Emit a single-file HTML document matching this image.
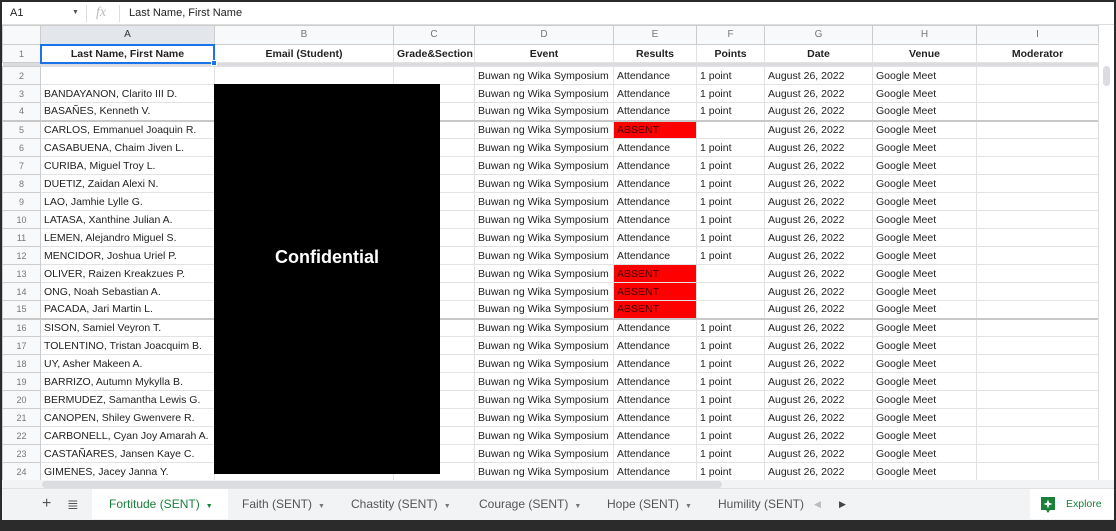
<!DOCTYPE html>
<html><head><meta charset="utf-8"><style>
*{box-sizing:border-box;margin:0;padding:0}
body{width:1116px;height:531px;background:#2b2b2b;position:relative;overflow:hidden;font-family:"Liberation Sans",Arial,sans-serif;font-size:10.5px;color:#222}
#app{position:absolute;left:2px;top:2px;width:1112px;height:518px;background:#fff;overflow:hidden}
#fb{position:absolute;left:0;top:0;width:1112px;height:23px;border-bottom:1px solid #ddd;background:#fff;font-size:11px}
#fb .nm{position:absolute;left:8px;top:5px}
#fb .dd{position:absolute;left:70px;top:7px;font-size:7px;color:#555}
#fb .sep{position:absolute;top:3px;width:1px;height:17px;background:#ddd}
#fb .fx{position:absolute;left:94px;top:3px;font-family:"Liberation Serif",serif;font-style:italic;color:#bbb;font-size:14px}
#fb .val{position:absolute;left:127px;top:5px}
table{position:absolute;left:0;top:23px;border-collapse:collapse;table-layout:fixed;width:1096px}
td{border:1px solid #e2e2e2;height:18px;padding:0 3px;white-space:nowrap;overflow:hidden;line-height:16px}
tr.hd td{background:#f8f9fa;color:#777;text-align:center;font-size:10px;height:19px;border-color:#ccc}
tr.hd td.selc{background:#e3e6ea;color:#333}
td.rn{background:#f8f9fa;color:#777;text-align:center;font-size:9px;padding:0;border-color:#ccc}
tr.r1 td{font-weight:bold;text-align:center}
tr.r1 td.rn{font-weight:normal}
tr.gap td{height:4px;padding:0;background:#dadce0;border:none}
td.ab{background:#ff0000;color:#3a0000}
tr.tk td{border-bottom:2px solid #c8c8c8}
#sel{position:absolute;left:38px;top:42px;width:175px;height:20px;border:2px solid #1a73e8}
#selh{position:absolute;left:209px;top:58px;width:6px;height:6px;background:#1a73e8;border:1px solid #fff}
#blk{position:absolute;left:212px;top:82px;width:226px;height:390px;background:#000;color:#fff;font-weight:bold;font-size:18px;text-align:center;line-height:346px;font-family:"Liberation Sans",sans-serif}
#vs{position:absolute;left:1096px;top:40px;width:16px;height:438px;background:#fff;border-left:1px solid #ddd}
#vs .th{position:absolute;left:4px;top:24px;width:7px;height:20px;background:#dadce0;border-radius:4px}
#hs{position:absolute;left:0;top:478px;width:1112px;height:9px;background:#f1f3f4}
#hs .th{position:absolute;left:40px;top:1px;width:680px;height:7px;background:#dadce0;border-radius:4px}
#tabs{position:absolute;left:0;top:486px;width:1112px;height:32px;background:#f1f3f4;border-top:1px solid #e0e0e0}
.tab{position:absolute;top:0;height:30px;line-height:30px;color:#555;font-size:12px}
.tab .c{font-size:7px;color:#777;margin-left:6px}
.act{background:#fff;color:#188038}
.act .c{color:#188038}
#ex{position:absolute;left:1028px;top:0;width:84px;height:30px;background:#fff}
</style></head><body><div id="app">
<div id="fb"><span class="nm">A1</span><span class="dd">▼</span><span class="sep" style="left:84px"></span><span class="fx">fx</span><span class="sep" style="left:117px"></span><span class="val">Last Name, First Name</span></div>
<table>
<colgroup><col style="width:38px"><col style="width:174px"><col style="width:179px"><col style="width:81px"><col style="width:139px"><col style="width:83px"><col style="width:68px"><col style="width:108px"><col style="width:104px"><col style="width:122px"></colgroup>
<tr class="hd"><td></td><td class="selc">A</td><td>B</td><td>C</td><td>D</td><td>E</td><td>F</td><td>G</td><td>H</td><td>I</td></tr>
<tr class="r1"><td class="rn">1</td><td>Last Name, First Name</td><td>Email (Student)</td><td>Grade&amp;Section</td><td>Event</td><td>Results</td><td>Points</td><td>Date</td><td>Venue</td><td>Moderator</td></tr>
<tr class="gap"><td colspan="10"></td></tr>
<tr><td class="rn">2</td><td></td><td></td><td></td><td>Buwan ng Wika Symposium</td><td>Attendance</td><td>1 point</td><td>August 26, 2022</td><td>Google Meet</td><td></td></tr>
<tr><td class="rn">3</td><td>BANDAYANON, Clarito III D.</td><td></td><td></td><td>Buwan ng Wika Symposium</td><td>Attendance</td><td>1 point</td><td>August 26, 2022</td><td>Google Meet</td><td></td></tr>
<tr class="tk"><td class="rn">4</td><td>BASAÑES, Kenneth V.</td><td></td><td></td><td>Buwan ng Wika Symposium</td><td>Attendance</td><td>1 point</td><td>August 26, 2022</td><td>Google Meet</td><td></td></tr>
<tr><td class="rn">5</td><td>CARLOS, Emmanuel Joaquin R.</td><td></td><td></td><td>Buwan ng Wika Symposium</td><td class="ab">ABSENT</td><td></td><td>August 26, 2022</td><td>Google Meet</td><td></td></tr>
<tr><td class="rn">6</td><td>CASABUENA, Chaim Jiven L.</td><td></td><td></td><td>Buwan ng Wika Symposium</td><td>Attendance</td><td>1 point</td><td>August 26, 2022</td><td>Google Meet</td><td></td></tr>
<tr><td class="rn">7</td><td>CURIBA, Miguel Troy L.</td><td></td><td></td><td>Buwan ng Wika Symposium</td><td>Attendance</td><td>1 point</td><td>August 26, 2022</td><td>Google Meet</td><td></td></tr>
<tr><td class="rn">8</td><td>DUETIZ, Zaidan Alexi N.</td><td></td><td></td><td>Buwan ng Wika Symposium</td><td>Attendance</td><td>1 point</td><td>August 26, 2022</td><td>Google Meet</td><td></td></tr>
<tr><td class="rn">9</td><td>LAO, Jamhie Lylle G.</td><td></td><td></td><td>Buwan ng Wika Symposium</td><td>Attendance</td><td>1 point</td><td>August 26, 2022</td><td>Google Meet</td><td></td></tr>
<tr><td class="rn">10</td><td>LATASA, Xanthine Julian A.</td><td></td><td></td><td>Buwan ng Wika Symposium</td><td>Attendance</td><td>1 point</td><td>August 26, 2022</td><td>Google Meet</td><td></td></tr>
<tr><td class="rn">11</td><td>LEMEN, Alejandro Miguel S.</td><td></td><td></td><td>Buwan ng Wika Symposium</td><td>Attendance</td><td>1 point</td><td>August 26, 2022</td><td>Google Meet</td><td></td></tr>
<tr><td class="rn">12</td><td>MENCIDOR, Joshua Uriel P.</td><td></td><td></td><td>Buwan ng Wika Symposium</td><td>Attendance</td><td>1 point</td><td>August 26, 2022</td><td>Google Meet</td><td></td></tr>
<tr><td class="rn">13</td><td>OLIVER, Raizen Kreakzues P.</td><td></td><td></td><td>Buwan ng Wika Symposium</td><td class="ab">ABSENT</td><td></td><td>August 26, 2022</td><td>Google Meet</td><td></td></tr>
<tr><td class="rn">14</td><td>ONG, Noah Sebastian A.</td><td></td><td></td><td>Buwan ng Wika Symposium</td><td class="ab">ABSENT</td><td></td><td>August 26, 2022</td><td>Google Meet</td><td></td></tr>
<tr class="tk"><td class="rn">15</td><td>PACADA, Jari Martin L.</td><td></td><td></td><td>Buwan ng Wika Symposium</td><td class="ab">ABSENT</td><td></td><td>August 26, 2022</td><td>Google Meet</td><td></td></tr>
<tr><td class="rn">16</td><td>SISON, Samiel Veyron T.</td><td></td><td></td><td>Buwan ng Wika Symposium</td><td>Attendance</td><td>1 point</td><td>August 26, 2022</td><td>Google Meet</td><td></td></tr>
<tr><td class="rn">17</td><td>TOLENTINO, Tristan Joacquim B.</td><td></td><td></td><td>Buwan ng Wika Symposium</td><td>Attendance</td><td>1 point</td><td>August 26, 2022</td><td>Google Meet</td><td></td></tr>
<tr><td class="rn">18</td><td>UY, Asher Makeen A.</td><td></td><td></td><td>Buwan ng Wika Symposium</td><td>Attendance</td><td>1 point</td><td>August 26, 2022</td><td>Google Meet</td><td></td></tr>
<tr><td class="rn">19</td><td>BARRIZO, Autumn Mykylla B.</td><td></td><td></td><td>Buwan ng Wika Symposium</td><td>Attendance</td><td>1 point</td><td>August 26, 2022</td><td>Google Meet</td><td></td></tr>
<tr><td class="rn">20</td><td>BERMUDEZ, Samantha Lewis G.</td><td></td><td></td><td>Buwan ng Wika Symposium</td><td>Attendance</td><td>1 point</td><td>August 26, 2022</td><td>Google Meet</td><td></td></tr>
<tr><td class="rn">21</td><td>CANOPEN, Shiley Gwenvere R.</td><td></td><td></td><td>Buwan ng Wika Symposium</td><td>Attendance</td><td>1 point</td><td>August 26, 2022</td><td>Google Meet</td><td></td></tr>
<tr><td class="rn">22</td><td>CARBONELL, Cyan Joy Amarah A.</td><td></td><td></td><td>Buwan ng Wika Symposium</td><td>Attendance</td><td>1 point</td><td>August 26, 2022</td><td>Google Meet</td><td></td></tr>
<tr><td class="rn">23</td><td>CASTAÑARES, Jansen Kaye C.</td><td></td><td></td><td>Buwan ng Wika Symposium</td><td>Attendance</td><td>1 point</td><td>August 26, 2022</td><td>Google Meet</td><td></td></tr>
<tr><td class="rn">24</td><td>GIMENES, Jacey Janna Y.</td><td></td><td></td><td>Buwan ng Wika Symposium</td><td>Attendance</td><td>1 point</td><td>August 26, 2022</td><td>Google Meet</td><td></td></tr>
</table>
<div id="sel"></div><div id="selh"></div>
<div id="blk">Confidential</div>
<div id="vs"><div class="th"></div></div>
<div id="hs"><div class="th"></div></div>
<div id="tabs">
<span class="tab" style="left:40px;font-size:16px;color:#555">+</span>
<span class="tab" style="left:65px;font-size:14px;color:#555">≣</span>
<span class="tab act" style="left:90px;width:136px;padding-left:17px">Fortitude (SENT)<span class="c">▼</span></span>
<span class="tab" style="left:240px">Faith (SENT)<span class="c">▼</span></span>
<span class="tab" style="left:349px">Chastity (SENT)<span class="c">▼</span></span>
<span class="tab" style="left:477px">Courage (SENT)<span class="c">▼</span></span>
<span class="tab" style="left:605px">Hope (SENT)<span class="c">▼</span></span>
<span class="tab" style="left:716px">Humility (SENT)</span>
<span class="tab" style="left:812px;font-size:9px;color:#bbb">◀</span>
<span class="tab" style="left:837px;font-size:9px;color:#444">▶</span>
<div id="ex">
<svg style="position:absolute;left:10px;top:7px" width="16" height="18" viewBox="0 0 16 18"><path d="M1 1h14v13h-5l-2 3-2-3H1z" fill="#188038"/><path d="M8 3.5l1.2 3.3 3.3 1.2-3.3 1.2L8 12.5 6.8 9.2 3.5 8l3.3-1.2z" fill="#fff"/></svg>
<span style="position:absolute;left:36px;top:9px;color:#188038;font-size:10.5px">Explore</span>
</div>
</div>
</div></body></html>
